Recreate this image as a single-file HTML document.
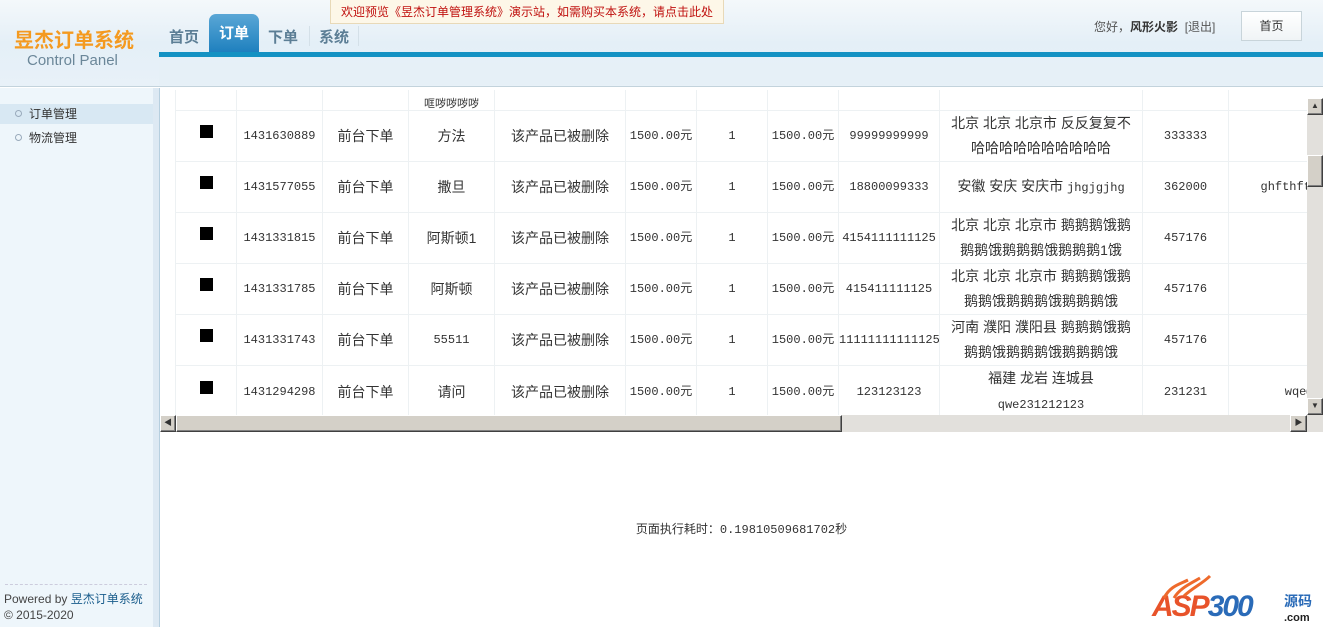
<!DOCTYPE html>
<html><head><meta charset="utf-8">
<style>
*{margin:0;padding:0;box-sizing:border-box}
body{width:1323px;height:627px;overflow:hidden;background:#fff;font-family:"Liberation Sans","Noto Sans CJK SC",sans-serif;position:relative;color:#333}
.abs{position:absolute}
#hdr{left:0;top:0;width:1323px;height:87px;background:linear-gradient(#f4f8fb,#e4eff7 50%,#e8f1f8);border-bottom:1px solid #c3d3dc}
#notice{left:330px;top:0;width:394px;height:24px;background:#fdf7e8;border:1px solid #e8d9b8;border-top:0;color:#c0110f;font-size:12px;line-height:24px;text-align:center}
#logo{left:14px;top:24px;font-size:20px;font-weight:bold;color:#f49a20}
#cp{left:27px;top:52px;font-size:15px;color:#6b8799}
.tab{top:26px;font-size:15px;color:#5c7e95;font-weight:bold}
#act{left:209px;top:14px;width:50px;height:39px;background:linear-gradient(#5aa7d6,#1d7fbe);border-radius:7px 7px 0 0;color:#fff;font-size:15px;font-weight:bold;text-align:center;line-height:40px}
#bar{left:159px;top:52px;width:1164px;height:5px;background:#1492c3}
#sub{left:159px;top:63px;width:1164px;height:22px;background:#e6f0f7}
#side{left:0;top:88px;width:159px;height:539px;background:#eef6fb;border-right:6px solid #dde9f3}
#side:after{content:"";position:absolute;right:-7px;top:0;width:1px;height:539px;background:#b6cfdf}
.mi{left:0;width:153px;height:20px;font-size:12px;line-height:20px;padding-left:29px;color:#333}
.mi i{position:absolute;left:15px;top:6px;width:7px;height:7px;border:1px solid #9ab;border-radius:50%}
#frame{left:160px;top:90px;width:1163px;height:342px;overflow:hidden;background:#fff}
table{border-collapse:collapse;position:absolute;left:15px;top:-31px;table-layout:fixed;width:1153px}
td{border:1px solid #edf1f3;height:51px;text-align:center;font-size:14px;color:#333;line-height:25px;white-space:nowrap;overflow:hidden}
td.m{font-family:"Liberation Mono","Noto Sans CJK SC",monospace;font-size:12px}
.sq{display:inline-block;width:13px;height:13px;background:#000;margin-top:-10px;vertical-align:middle}
.track{background:#e2e0dc}
.btn{background:#d4d0c8;border:1px solid;border-color:#fff #404040 #404040 #fff;box-shadow:inset -1px -1px #808080}
#foot{left:0;top:520px;width:1323px;text-align:center;font-size:12px;color:#333;padding-left:160px}
</style></head><body>
<div id="hdr" class="abs"></div>
<div id="notice" class="abs">欢迎预览《昱杰订单管理系统》演示站，如需购买本系统，请点击此处</div>
<div id="logo" class="abs">昱杰订单系统</div>
<div id="cp" class="abs">Control Panel</div>
<div class="abs tab" style="left:169px">首页</div>
<div id="act" class="abs">订单</div>
<div class="abs tab" style="left:268px">下单</div>
<div class="abs" style="left:309px;top:26px;width:1px;height:20px;background:#d4e0e8"></div>
<div class="abs tab" style="left:319px">系统</div>
<div class="abs" style="left:358px;top:26px;width:1px;height:20px;background:#d4e0e8"></div>
<div class="abs" style="left:1094px;top:18px;font-size:12px;color:#555">您好，<b style="color:#333">风形火影</b> &nbsp;[退出]</div>
<div class="abs" style="left:1241px;top:11px;width:61px;height:30px;border:1px solid #c8d4da;background:linear-gradient(#fff,#f0f4f6);font-size:12px;text-align:center;line-height:28px;color:#333">首页</div>
<div id="bar" class="abs"></div>
<div id="sub" class="abs"></div>
<div id="side" class="abs"></div>
<div class="abs mi" style="top:104px;background:#d8e8f3"><i></i>订单管理</div>
<div class="abs mi" style="top:128px"><i></i>物流管理</div>
<div class="abs" style="left:5px;top:584px;width:142px;border-top:1px dashed #ccd;"></div>
<div class="abs" style="left:4px;top:590px;font-size:12px;color:#444">Powered by <span style="color:#1a5d8c">昱杰订单系统</span></div>
<div class="abs" style="left:4px;top:608px;font-size:12px;color:#444">© 2015-2020</div>

<div id="frame" class="abs">
<table>
<colgroup><col style="width:61px"><col style="width:86px"><col style="width:86px"><col style="width:86px"><col style="width:131px"><col style="width:71px"><col style="width:71px"><col style="width:71px"><col style="width:101px"><col style="width:203px"><col style="width:86px"><col style="width:100px"></colgroup>
<tr><td></td><td></td><td></td><td style="vertical-align:bottom;font-size:11px;line-height:12px">哐哕哕哕哕</td><td></td><td></td><td></td><td></td><td></td><td></td><td></td><td></td></tr>
<tr><td><span class="sq"></span></td><td class="m">1431630889</td><td>前台下单</td><td>方法</td><td>该产品已被删除</td><td class="m">1500.00元</td><td class="m">1</td><td class="m">1500.00元</td><td class="m">99999999999</td><td>北京 北京 北京市 反反复复不<br>哈哈哈哈哈哈哈哈哈哈</td><td class="m">333333</td><td></td></tr>
<tr><td><span class="sq"></span></td><td class="m">1431577055</td><td>前台下单</td><td>撒旦</td><td>该产品已被删除</td><td class="m">1500.00元</td><td class="m">1</td><td class="m">1500.00元</td><td class="m">18800099333</td><td>安徽 安庆 安庆市 <span style="font-family:'Liberation Mono',monospace;font-size:12px">jhgjgjhg</span></td><td class="m">362000</td><td class="m">&nbsp;&nbsp;&nbsp;ghfthfty</td></tr>
<tr><td><span class="sq"></span></td><td class="m">1431331815</td><td>前台下单</td><td>阿斯顿1</td><td>该产品已被删除</td><td class="m">1500.00元</td><td class="m">1</td><td class="m">1500.00元</td><td class="m">4154111111125</td><td>北京 北京 北京市 鹅鹅鹅饿鹅<br>鹅鹅饿鹅鹅鹅饿鹅鹅鹅1饿</td><td class="m">457176</td><td></td></tr>
<tr><td><span class="sq"></span></td><td class="m">1431331785</td><td>前台下单</td><td>阿斯顿</td><td>该产品已被删除</td><td class="m">1500.00元</td><td class="m">1</td><td class="m">1500.00元</td><td class="m">415411111125</td><td>北京 北京 北京市 鹅鹅鹅饿鹅<br>鹅鹅饿鹅鹅鹅饿鹅鹅鹅饿</td><td class="m">457176</td><td></td></tr>
<tr><td><span class="sq"></span></td><td class="m">1431331743</td><td>前台下单</td><td class="m">55511</td><td>该产品已被删除</td><td class="m">1500.00元</td><td class="m">1</td><td class="m">1500.00元</td><td class="m">11111111111125</td><td>河南 濮阳 濮阳县 鹅鹅鹅饿鹅<br>鹅鹅饿鹅鹅鹅饿鹅鹅鹅饿</td><td class="m">457176</td><td></td></tr>
<tr><td><span class="sq"></span></td><td class="m">1431294298</td><td>前台下单</td><td>请问</td><td>该产品已被删除</td><td class="m">1500.00元</td><td class="m">1</td><td class="m">1500.00元</td><td class="m">123123123</td><td>福建 龙岩 连城县<br><span style="font-family:'Liberation Mono',monospace;font-size:12px">qwe231212123</span></td><td class="m">231231</td><td class="m" style="text-align:right">wqe@qq</td></tr>
</table>
<div class="abs track" style="left:1147px;top:8px;width:16px;height:317px"></div>
<div class="abs btn" style="left:1147px;top:8px;width:16px;height:17px;font-size:8px;text-align:center;line-height:14px">▲</div>
<div class="abs btn" style="left:1147px;top:65px;width:16px;height:32px"></div>
<div class="abs btn" style="left:1147px;top:308px;width:16px;height:17px;font-size:8px;text-align:center;line-height:14px">▼</div>
<div class="abs track" style="left:0;top:325px;width:1163px;height:17px"></div>
<div class="abs btn" style="left:0;top:325px;width:16px;height:17px;font-size:8px;text-align:center;line-height:14px">◀</div>
<div class="abs btn" style="left:16px;top:325px;width:666px;height:17px"></div>
<div class="abs btn" style="left:1130px;top:325px;width:17px;height:17px;font-size:8px;text-align:center;line-height:14px">▶</div>
</div>

<div id="foot" class="abs">页面执行耗时：<span style="font-family:'Liberation Mono',monospace">0.19810509681702</span>秒</div>

<div class="abs" style="left:1152px;top:590px;font-size:30px;font-weight:bold;font-style:italic;letter-spacing:-2px;line-height:34px"><span style="color:#e8532a">ASP</span><span style="color:#2a6bb8">300</span></div>
<div class="abs" style="left:1284px;top:594px;font-size:14px;font-weight:bold;color:#2a6bb8;line-height:15px">源码<br><span style="font-size:11px;color:#222">.com</span></div>
<svg class="abs" style="left:1160px;top:574px" width="80" height="26"><path d="M4 24 C10 12 20 10 28 6 M14 24 C20 14 30 10 40 4 M24 22 C32 14 42 10 50 2" stroke="#ee6a2c" stroke-width="3" fill="none"/></svg>
</body></html>
